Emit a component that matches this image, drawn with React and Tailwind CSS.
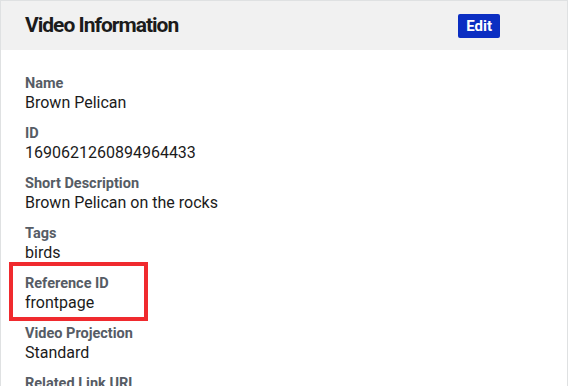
import React from 'react';

const fields = [
  { label: 'Name', value: 'Brown Pelican' },
  { label: 'ID', value: '1690621260894964433' },
  { label: 'Short Description', value: 'Brown Pelican on the rocks' },
  { label: 'Tags', value: 'birds' },
  { label: 'Reference ID', value: 'frontpage', highlight: true },
  { label: 'Video Projection', value: 'Standard' },
  { label: 'Related Link URL', value: '' },
];

const App = () => {
  return (
    <div className="h-[386px] w-[569px] overflow-hidden bg-white font-['Roboto',sans-serif]">
      <div className="relative mr-px h-[420px] border border-[#dfe1e2]">
        {/* Header */}
        <div className="flex h-[49px] items-center justify-between bg-[#f1f1f1] pl-[24px] pr-[67px]">
          <h2 className="pt-px text-[21px] font-bold tracking-[-1px] text-[#1b1b1b]">Video Information</h2>
          <button className="h-6 rounded-[2px] bg-[#0b2ec2] px-[8px] text-[15px] font-bold leading-6 text-white">
            Edit
          </button>
        </div>

        {/* Fields */}
        <div className="flex flex-col gap-[13px] px-6 pt-[25px]">
          {fields.map((f) => (
            <div key={f.label} className="relative">
              {f.highlight && (
                <div className="absolute left-[-16px] top-[-13px] h-[59px] w-[139px] border-4 border-[#f02a2e]" />
              )}
              <div className="text-[14.5px] font-bold leading-[18px] text-[#565c65]">{f.label}</div>
              <div className="text-[16px] leading-[19px] text-[#1b1b1b]">{f.value}</div>
            </div>
          ))}
        </div>
      </div>
    </div>
  );
};

export default App;
